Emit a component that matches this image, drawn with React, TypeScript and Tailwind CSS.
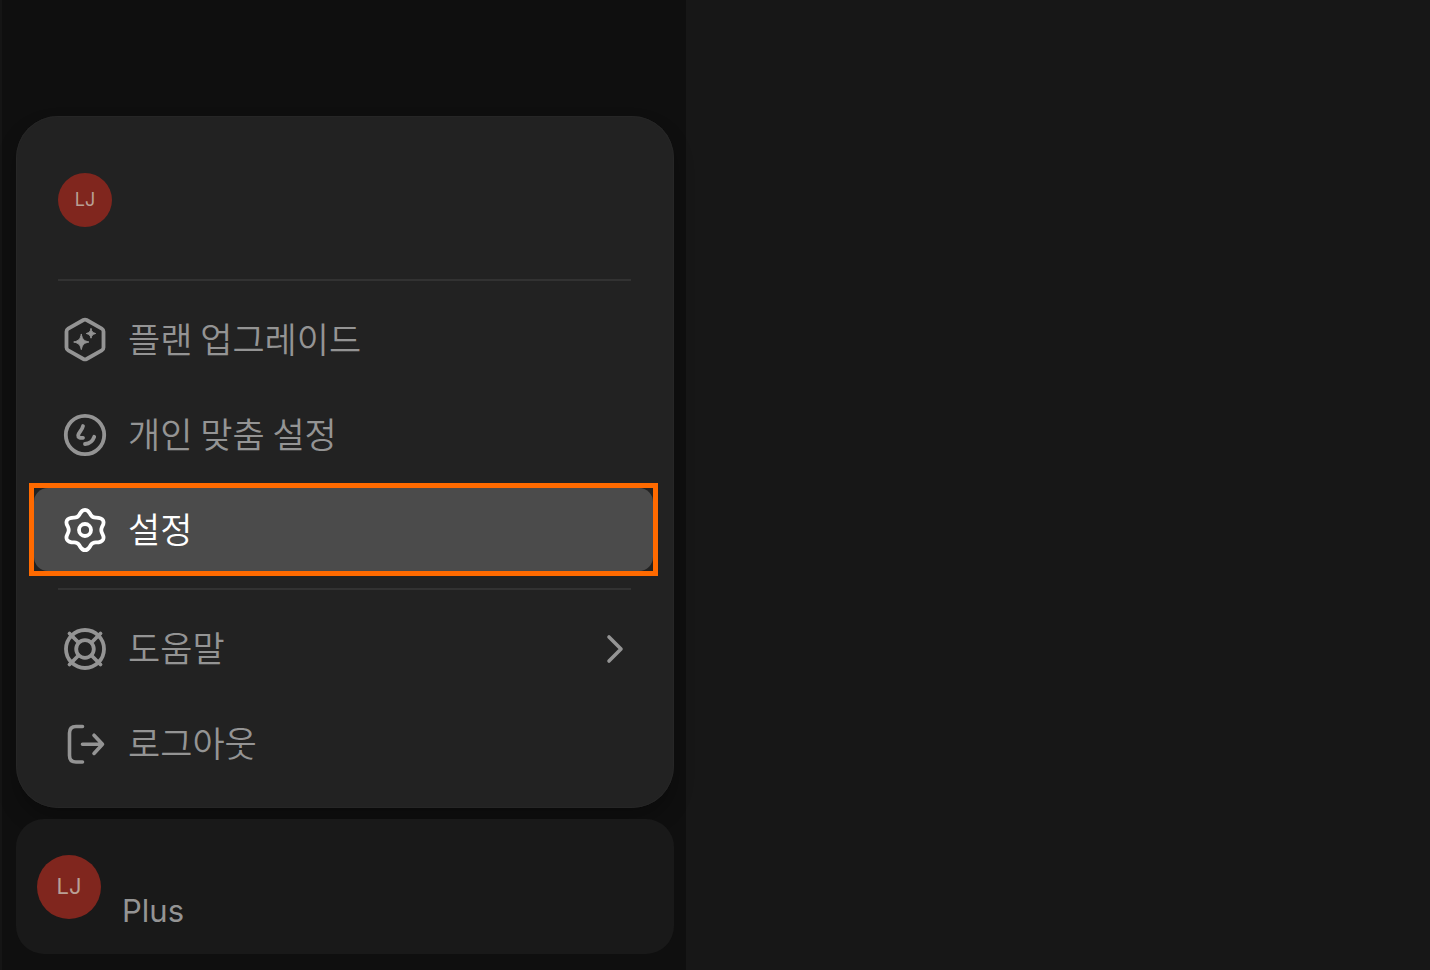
import type { ReactNode } from "react";

function Icon({ children }: { children: ReactNode }) {
  return (
    <svg
      viewBox="0 0 48 48"
      className="size-12 shrink-0"
      fill="none"
      stroke="currentColor"
      strokeWidth="3.8"
      strokeLinecap="round"
      strokeLinejoin="round"
      aria-hidden="true"
    >
      {children}
    </svg>
  );
}

function UpgradeIcon() {
  return (
    <Icon>
      <path d="M22.4 4Q24 3.1 25.6 4L40.8 12.6Q42.5 13.6 42.5 15.5V31.5Q42.5 33.4 40.8 34.4L25.6 43Q24 43.9 22.4 43L7.2 34.4Q5.5 33.4 5.5 31.5V15.5Q5.5 13.6 7.2 12.6Z" />
      <path
        fill="currentColor"
        strokeWidth="1"
        d="M20.3 18.4C21.6 23.6 22.7 24.7 27.9 26C22.7 27.3 21.6 28.4 20.3 33.6C19 28.4 17.9 27.3 12.7 26C17.9 24.7 19 23.6 20.3 18.4ZM30 12.8C30.9 16 31.5 16.600 34.700 17.500C31.500 18.400 30.900 19 30 22.200C29.100 19 28.500 18.400 25.300 17.500C28.500 16.600 29.100 16 30 12.800Z"
      />
    </Icon>
  );
}

function PersonalizeIcon() {
  return (
    <Icon>
      <circle cx="24" cy="24" r="19.2" />
      <path d="M22 15C21.3 19 17.6 21.5 17.2 24.3C17 26.6 19 27.2 22 26.800M33.200 25.800C31.800 29.800 28.500 32.600 24 33" />
    </Icon>
  );
}

function SettingsIcon() {
  return (
    <Icon>
      <path d="M24 3.800C27.500 3.800 28.300 6.500 29.800 9C31 11 32.500 11.600 34.800 11.600C37.800 11.600 40.300 11.500 42 14.300C43.600 17.200 41.900 19 40.900 21.200C40.100 23 40.100 25 40.900 26.800C41.900 29 43.600 30.800 42 33.700C40.300 36.500 37.800 36.400 34.800 36.400C32.500 36.400 31 37 29.800 39C28.300 41.500 27.500 44.200 24 44.200C20.500 44.200 19.700 41.500 18.200 39C17 37 15.500 36.400 13.200 36.400C10.200 36.400 7.700 36.500 6 33.700C4.400 30.800 6.100 29 7.100 26.800C7.900 25 7.900 23 7.100 21.200C6.100 19 4.400 17.200 6 14.300C7.700 11.500 10.200 11.600 13.200 11.600C15.500 11.600 17 11 18.200 9C19.700 6.500 20.500 3.800 24 3.800Z" />
      <circle cx="24" cy="24" r="6" />
    </Icon>
  );
}

function HelpIcon() {
  return (
    <Icon>
      <circle cx="24" cy="24" r="19" />
      <circle cx="24" cy="24" r="8.800" />
      <path d="M8.500 8.500L17.500 17.500M39.500 8.500L30.500 17.500M8.500 39.500L17.500 30.500M39.500 39.500L30.500 30.500" />
    </Icon>
  );
}

function LogoutIcon() {
  return (
    <Icon>
      <path
        strokeWidth="3.600"
        d="M21.500 6.500H15Q8.500 6.500 8.500 13V35.500Q8.500 42 15 42H21.500M21.500 24.300H41.500M33 15.200L41.500 24.300L33 33.400"
      />
    </Icon>
  );
}

function Avatar({ large = false }: { large?: boolean }) {
  return (
    <span
      className={
        "flex shrink-0 items-center justify-center rounded-full bg-[#80261e] font-[Inter,sans-serif] font-normal text-[#b9a096] " +
        (large ? "size-16 text-[22px]" : "size-[54px] text-lg")
      }
    >
      LJ
    </span>
  );
}

function MenuItem({
  icon,
  label,
  active = false,
  submenu = false,
}: {
  icon: ReactNode;
  label: string;
  active?: boolean;
  submenu?: boolean;
}) {
  return (
    <div className={active ? "border-5 border-[#ff6a00] bg-[#222]" : "border-5 border-transparent"}>
      <button
        type="button"
        role="menuitem"
        aria-haspopup={submenu ? "menu" : undefined}
        className={
          "flex h-[83px] w-full items-center gap-[19px] pr-[26px] pl-[27px] text-left text-[35px] leading-none " +
          (active ? "rounded-[14px] bg-[#4b4b4b] text-white" : "text-[#949494]")
        }
      >
        {icon}
        <span className="flex-1 pb-1">{label}</span>
        {submenu && (
          <svg
            viewBox="0 0 24 32"
            className="h-8 w-6"
            fill="none"
            stroke="currentColor"
            strokeWidth="3.600"
            strokeLinecap="round"
            strokeLinejoin="round"
            aria-hidden="true"
          >
            <path d="M6 4L18 16L6 28" />
          </svg>
        )}
      </button>
    </div>
  );
}

function Divider() {
  return <hr className="my-3 mr-[27px] ml-[29px] border-t-2 border-[#323232]" />;
}

export default function App() {
  return (
    <div className="flex min-h-screen bg-[#171717] font-['Noto_Sans_CJK_KR',sans-serif] font-[350]">
      <aside className="flex w-[48%] flex-col justify-end border-l-2 border-[#151515] bg-[#0f0f0f] pr-3 pb-4 pl-[14px]">
        <div
          role="menu"
          aria-label="LJ"
          className="mb-[11px] rounded-[42px] bg-[#222] pt-[17px] pr-4 pb-[18px] pl-[13px] shadow-[0_12px_20px_rgba(0,0,0,0.25)] ring-1 ring-[#262626] ring-inset"
        >
          <div className="flex h-[134px] items-center px-[29px]">
            <Avatar />
          </div>
          <Divider />
          <div className="flex flex-col gap-0.5">
            <MenuItem icon={<UpgradeIcon />} label="플랜 업그레이드" />
            <MenuItem icon={<PersonalizeIcon />} label="개인 맞춤 설정" />
            <MenuItem icon={<SettingsIcon />} label="설정" active />
          </div>
          <Divider />
          <div className="flex flex-col gap-0.5">
            <MenuItem icon={<HelpIcon />} label="도움말" submenu />
            <MenuItem icon={<LogoutIcon />} label="로그아웃" />
          </div>
        </div>
        <button
          type="button"
          className="flex h-[135px] items-center gap-[21px] rounded-[28px] bg-[#191919] pl-[21px] text-left"
        >
          <Avatar large />
          <span className="pt-12 font-[Inter,sans-serif] text-[31px] leading-none font-normal text-[#949494]">
            Plus
          </span>
        </button>
      </aside>
      <main className="flex-1" />
    </div>
  );
}
